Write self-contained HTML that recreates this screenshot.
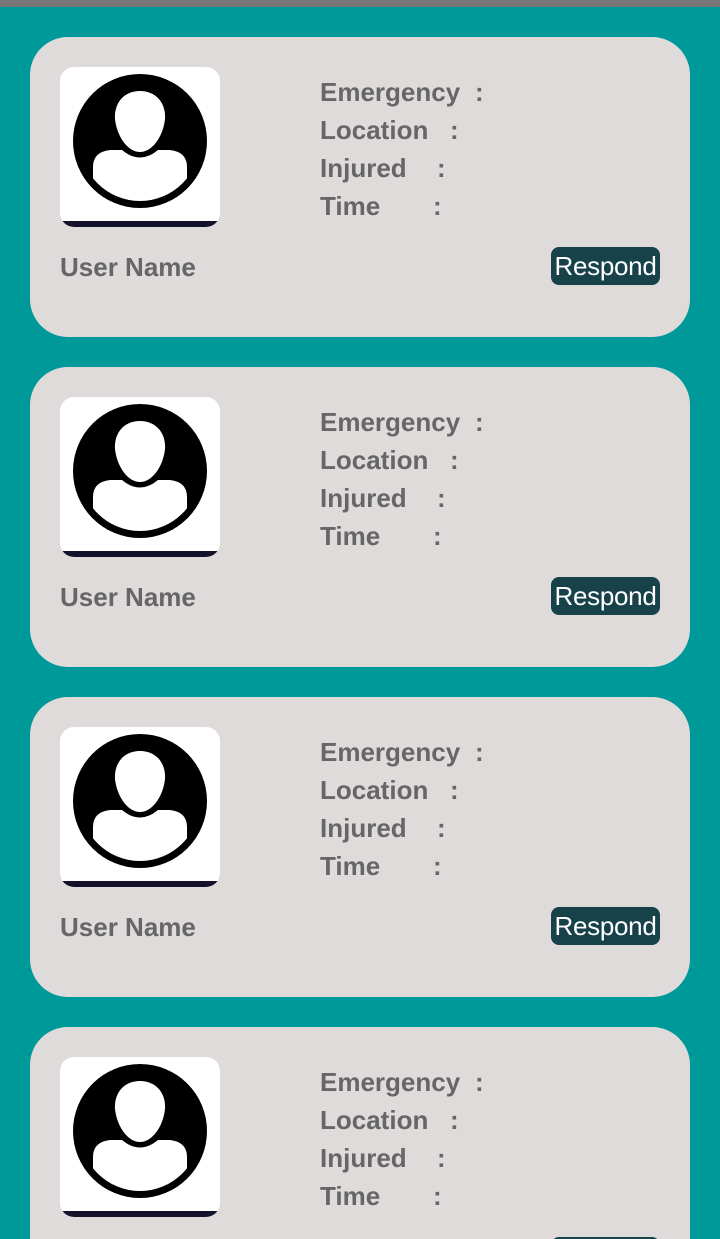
<!DOCTYPE html>
<html><head><style>
html,body{margin:0;padding:0;height:1239px;overflow:hidden}
body{width:720px;background:#009999;position:relative;font-family:"Liberation Sans",Roboto,sans-serif}
.top{position:absolute;left:0;top:0;width:720px;height:7px;background:#777}
.card{position:absolute;left:30px;width:660px;height:300px;background:#e0dbdb;border-radius:38px}
.av{position:absolute;left:30px;top:30px;width:160px;height:160px;background:#fff;border-radius:14px;overflow:hidden}
.av .strip{position:absolute;left:0;bottom:0;width:160px;height:6px;background:#14122a}
.av svg{position:absolute;left:0;top:0}
.f{position:absolute;left:290px;font-size:26px;font-weight:bold;color:#666;line-height:38px}
.f span{position:absolute;white-space:nowrap}
.un{position:absolute;left:30px;top:215px;font-size:26px;font-weight:bold;color:#666}
.btn{position:absolute;left:521px;top:210px;width:109px;height:38px;background:#17424a;border-radius:8px;color:#fff;font-size:26px;line-height:38px;text-align:center;letter-spacing:-0.3px}
</style></head><body>
<div class="top"></div>

<div class="card" style="top:37px">
<div class="av"><svg width="160" height="160"><defs><clipPath id="c1"><circle cx="80" cy="74" r="60"/></clipPath></defs><circle cx="80" cy="74" r="67" fill="#000"/><path d="M80 24 C96 24 106 36 105 52 C103 70 92 85 80 85 C68 85 57 70 55 52 C54 36 64 24 80 24Z" fill="#fff"/><g clip-path="url(#c1)"><path d="M33 150 L33 100 Q33 85 50 83 L62 83 Q80 98 98 83 L110 83 Q127 85 127 100 L127 150Z" fill="#fff"/></g></svg><div class="strip"></div></div>
<div class="f" style="top:36px"><span style="top:0">Emergency</span><span style="left:155px;top:0">:</span><span style="top:38px">Location</span><span style="left:130px;top:38px">:</span><span style="top:76px">Injured</span><span style="left:117px;top:76px">:</span><span style="top:114px">Time</span><span style="left:113px;top:114px">:</span></div>
<div class="un">User Name</div><div class="btn">Respond</div>
</div>

<div class="card" style="top:367px">
<div class="av"><svg width="160" height="160"><defs><clipPath id="c2"><circle cx="80" cy="74" r="60"/></clipPath></defs><circle cx="80" cy="74" r="67" fill="#000"/><path d="M80 24 C96 24 106 36 105 52 C103 70 92 85 80 85 C68 85 57 70 55 52 C54 36 64 24 80 24Z" fill="#fff"/><g clip-path="url(#c2)"><path d="M33 150 L33 100 Q33 85 50 83 L62 83 Q80 98 98 83 L110 83 Q127 85 127 100 L127 150Z" fill="#fff"/></g></svg><div class="strip"></div></div>
<div class="f" style="top:36px"><span style="top:0">Emergency</span><span style="left:155px;top:0">:</span><span style="top:38px">Location</span><span style="left:130px;top:38px">:</span><span style="top:76px">Injured</span><span style="left:117px;top:76px">:</span><span style="top:114px">Time</span><span style="left:113px;top:114px">:</span></div>
<div class="un">User Name</div><div class="btn">Respond</div>
</div>

<div class="card" style="top:697px">
<div class="av"><svg width="160" height="160"><defs><clipPath id="c3"><circle cx="80" cy="74" r="60"/></clipPath></defs><circle cx="80" cy="74" r="67" fill="#000"/><path d="M80 24 C96 24 106 36 105 52 C103 70 92 85 80 85 C68 85 57 70 55 52 C54 36 64 24 80 24Z" fill="#fff"/><g clip-path="url(#c3)"><path d="M33 150 L33 100 Q33 85 50 83 L62 83 Q80 98 98 83 L110 83 Q127 85 127 100 L127 150Z" fill="#fff"/></g></svg><div class="strip"></div></div>
<div class="f" style="top:36px"><span style="top:0">Emergency</span><span style="left:155px;top:0">:</span><span style="top:38px">Location</span><span style="left:130px;top:38px">:</span><span style="top:76px">Injured</span><span style="left:117px;top:76px">:</span><span style="top:114px">Time</span><span style="left:113px;top:114px">:</span></div>
<div class="un">User Name</div><div class="btn">Respond</div>
</div>

<div class="card" style="top:1027px">
<div class="av"><svg width="160" height="160"><defs><clipPath id="c4"><circle cx="80" cy="74" r="60"/></clipPath></defs><circle cx="80" cy="74" r="67" fill="#000"/><path d="M80 24 C96 24 106 36 105 52 C103 70 92 85 80 85 C68 85 57 70 55 52 C54 36 64 24 80 24Z" fill="#fff"/><g clip-path="url(#c4)"><path d="M33 150 L33 100 Q33 85 50 83 L62 83 Q80 98 98 83 L110 83 Q127 85 127 100 L127 150Z" fill="#fff"/></g></svg><div class="strip"></div></div>
<div class="f" style="top:36px"><span style="top:0">Emergency</span><span style="left:155px;top:0">:</span><span style="top:38px">Location</span><span style="left:130px;top:38px">:</span><span style="top:76px">Injured</span><span style="left:117px;top:76px">:</span><span style="top:114px">Time</span><span style="left:113px;top:114px">:</span></div>
<div class="un">User Name</div><div class="btn">Respond</div>
</div>
</body></html>
